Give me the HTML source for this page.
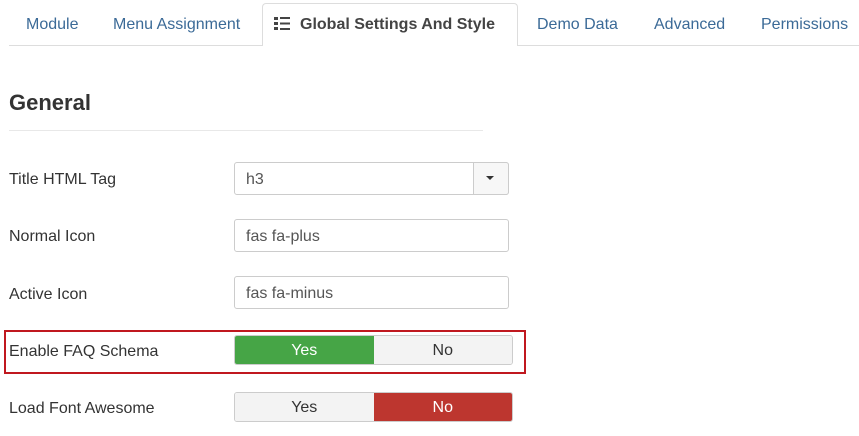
<!DOCTYPE html>
<html><head><style>
body{margin:0;width:859px;height:436px;background:#fff;font-family:"Liberation Sans",sans-serif;position:relative;overflow:hidden;color:#333}
.a{position:absolute}
.tab{position:absolute;top:16px;font-size:16px;color:#3b6a97}
.lbl{position:absolute;left:9px;font-size:16px;color:#333}
.inp{position:absolute;left:234px;width:275px;height:33px;border:1px solid #ccc;border-radius:3px;box-sizing:border-box;font-size:16px;line-height:33px;padding-left:11px;color:#555}
.tg{position:absolute;left:234px;width:279px;height:30px;box-sizing:border-box;border:1px solid #ccc;border-radius:3px;display:flex;overflow:hidden;font-size:16px}
.tg div{flex:1;text-align:center;line-height:29px;background:#f3f3f3;color:#333}
</style></head><body>
<div class="a" style="left:9px;top:45px;width:850px;height:1px;background:#ddd"></div>
<div class="a" style="left:262px;top:3px;width:256px;height:43px;background:#fff;border:1px solid #ddd;border-bottom:none;border-radius:4px 4px 0 0;box-sizing:border-box"></div>
<span class="tab" style="left:26px">Module</span>
<span class="tab" style="left:113px">Menu Assignment</span>
<svg class="a" style="left:274px;top:17px" width="16" height="14" viewBox="0 0 16 14"><g fill="#444"><rect x="0" y="0" width="4" height="3"/><rect x="0" y="5" width="4" height="3"/><rect x="0" y="10" width="4" height="3"/><rect x="6" y="0" width="10" height="2"/><rect x="6" y="5.5" width="10" height="2"/><rect x="6" y="11" width="10" height="2"/></g></svg>
<span class="tab" style="left:300px;color:#444;font-weight:bold">Global Settings And Style</span>
<span class="tab" style="left:537px">Demo Data</span>
<span class="tab" style="left:654px">Advanced</span>
<span class="tab" style="left:761px">Permissions</span>
<div class="a" style="left:9px;top:90px;font-size:22px;font-weight:bold;color:#333">General</div>
<div class="a" style="left:9px;top:130px;width:474px;height:1px;background:#e8e8e8"></div>
<span class="lbl" style="top:171px">Title HTML Tag</span>
<div class="inp" style="top:162px">h3</div>
<div class="a" style="left:473px;top:162px;width:36px;height:33px;border:1px solid #ccc;border-radius:0 3px 3px 0;box-sizing:border-box;background:#f7f7f7"></div>
<div class="a" style="left:486px;top:176px;width:0;height:0;border-left:4px solid transparent;border-right:4px solid transparent;border-top:4px solid #333"></div>
<span class="lbl" style="top:228px">Normal Icon</span>
<div class="inp" style="top:219px">fas fa-plus</div>
<span class="lbl" style="top:286px">Active Icon</span>
<div class="inp" style="top:276px">fas fa-minus</div>
<div class="a" style="left:4px;top:330px;width:522px;height:44px;border:2px solid #c0181f;box-sizing:border-box"></div>
<span class="lbl" style="top:343px">Enable FAQ Schema</span>
<div class="tg" style="top:335px"><div style="background:#46a546;color:#fff">Yes</div><div>No</div></div>
<span class="lbl" style="top:400px">Load Font Awesome</span>
<div class="tg" style="top:392px"><div>Yes</div><div style="background:#bd362f;color:#fff">No</div></div>
</body></html>
